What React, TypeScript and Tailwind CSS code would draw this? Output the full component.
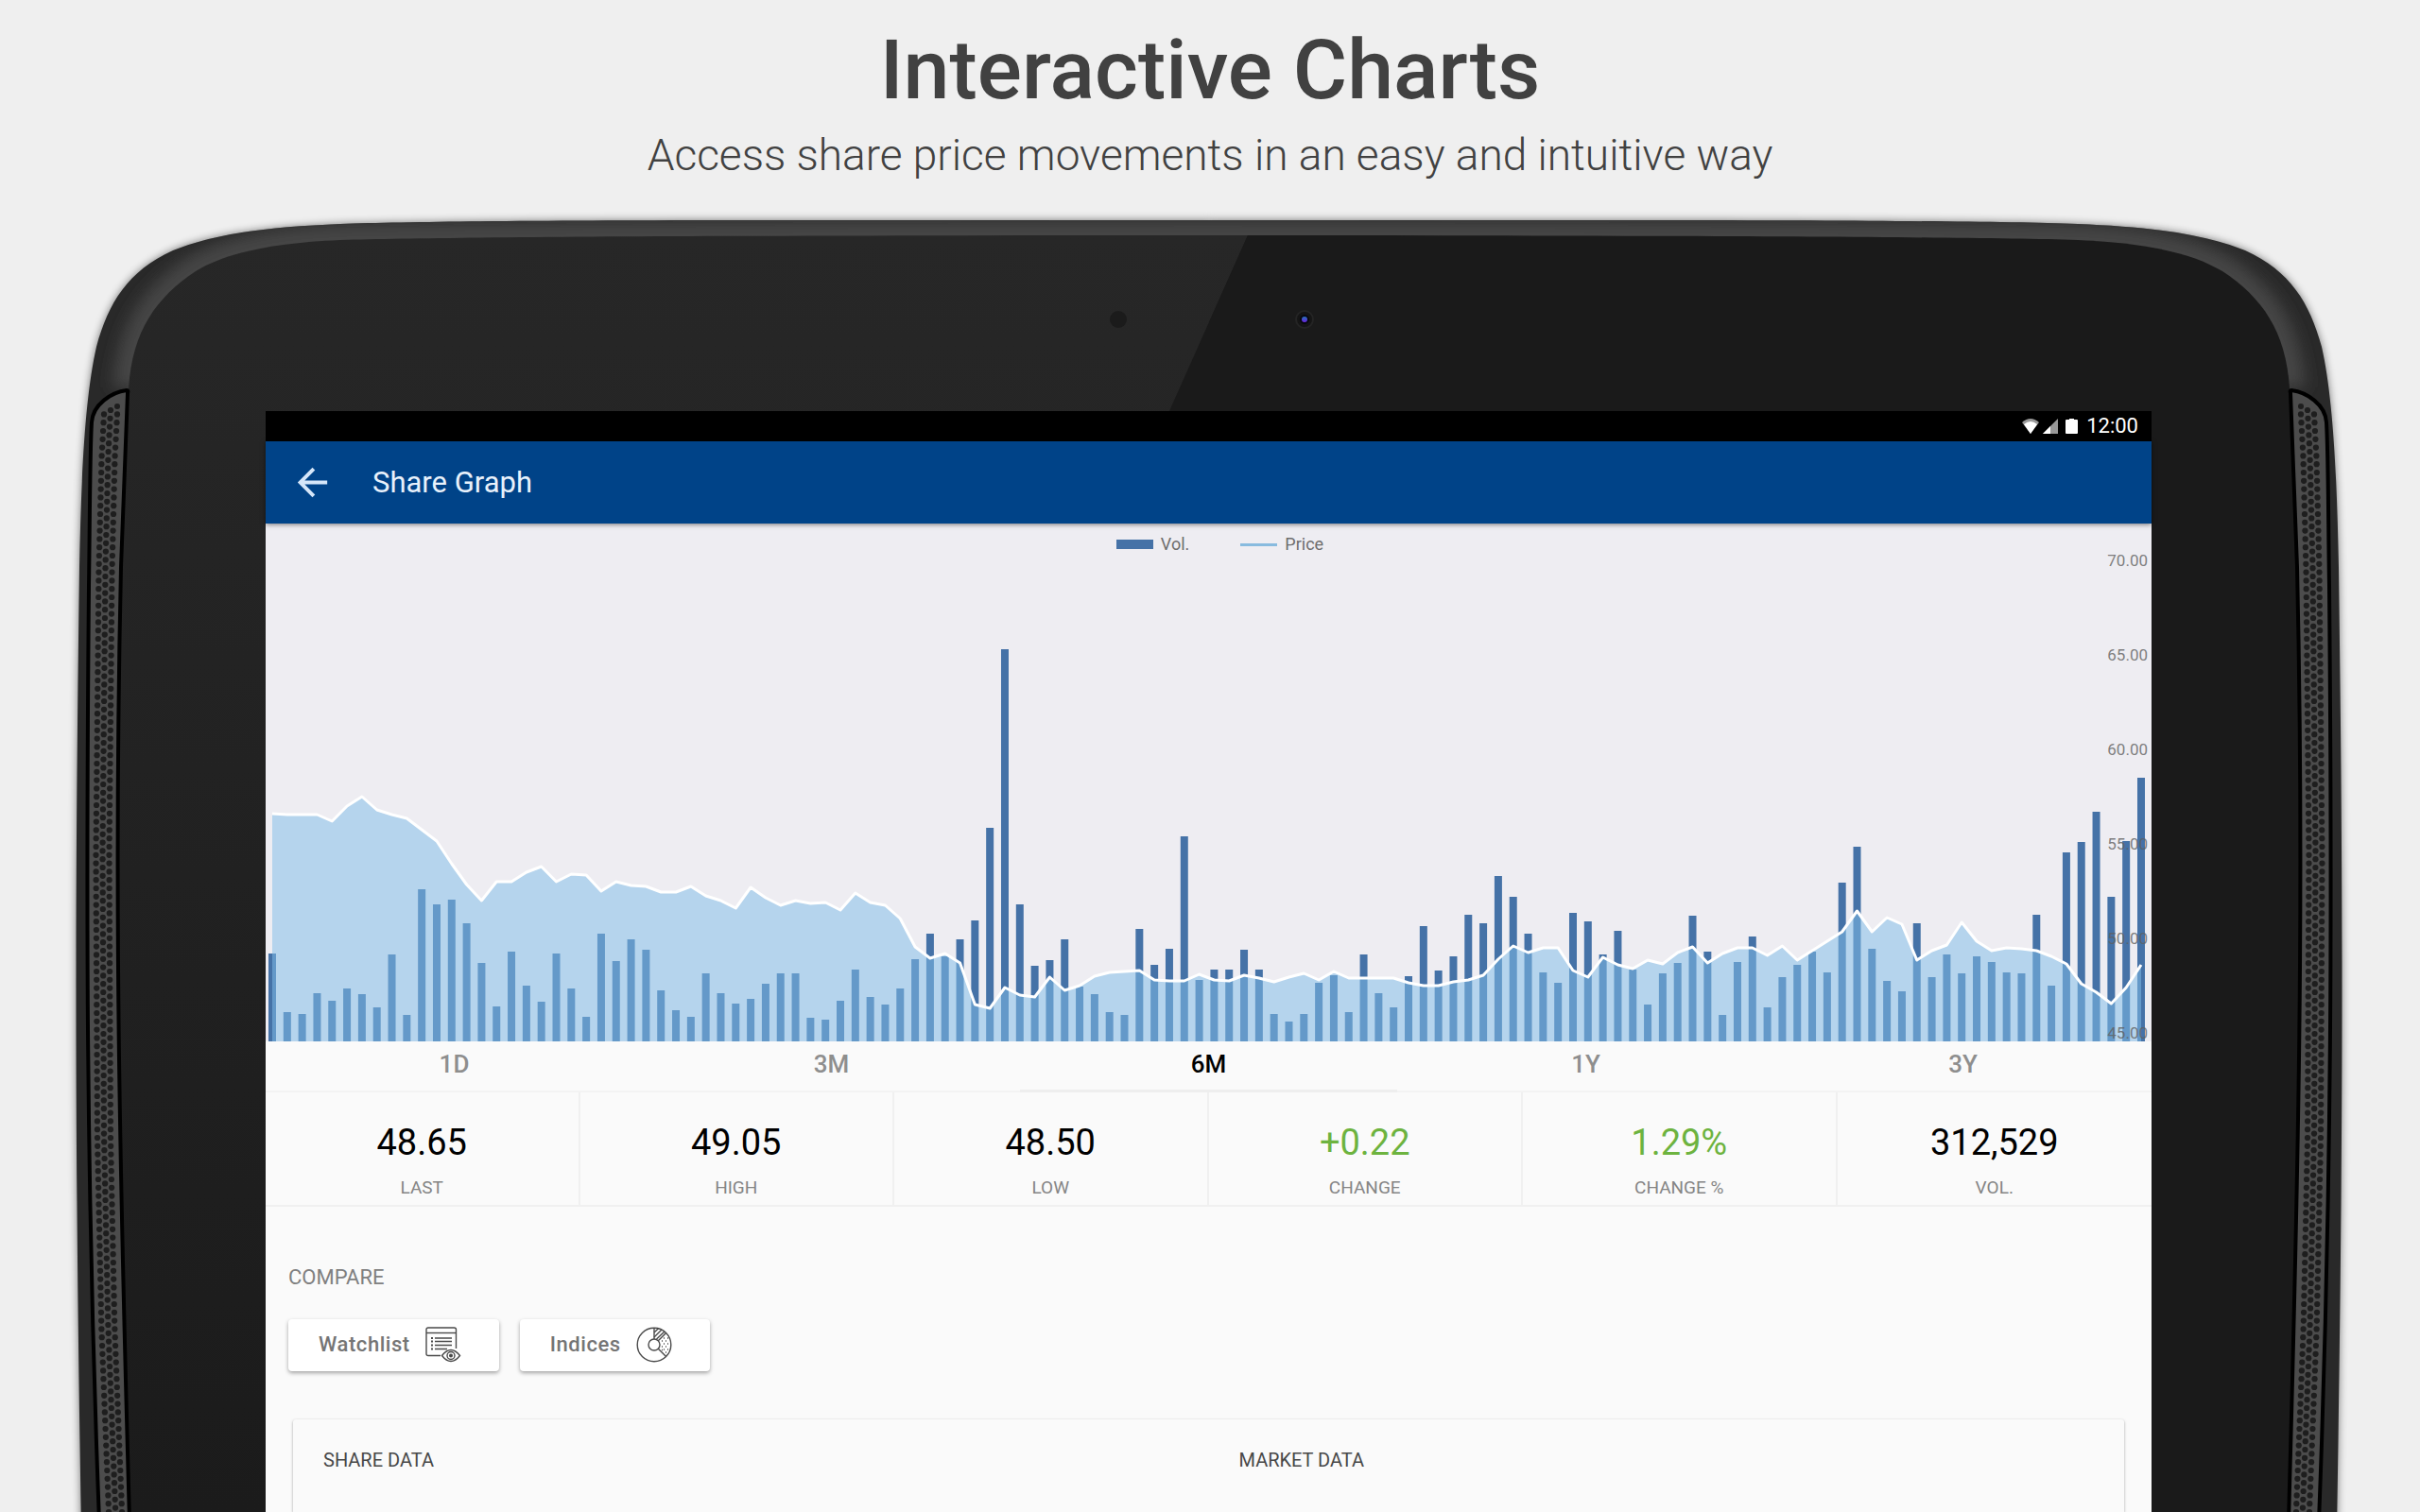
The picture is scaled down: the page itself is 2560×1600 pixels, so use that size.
import { MdArrowBack } from "react-icons/md";

interface Stat {
  label: string;
  value: string;
  positive?: boolean;
}

const STATS: Stat[] = [
  { label: "LAST", value: "48.65" },
  { label: "HIGH", value: "49.05" },
  { label: "LOW", value: "48.50" },
  { label: "CHANGE", value: "+0.22", positive: true },
  { label: "CHANGE %", value: "1.29%", positive: true },
  { label: "VOL.", value: "312,529" },
];

const RANGES = ["1D", "3M", "6M", "1Y", "3Y"];

const AXIS = ["70.00", "65.00", "60.00", "55.00", "50.00", "45.00"];

const VOLUME = [
  93, 31, 29, 51, 43, 56, 50, 36, 92, 28, 161, 145, 150, 125, 83, 37, 95, 59, 42, 93,
  56, 26, 114, 85, 108, 97, 54, 33, 26, 72, 51, 40, 45, 61, 72, 72, 25, 23, 43, 76,
  47, 39, 56, 87, 114, 90, 108, 128, 226, 415, 145, 80, 86, 108, 58, 50, 31, 28, 119, 81,
  98, 217, 65, 76, 76, 97, 76, 29, 21, 29, 62, 70, 31, 92, 51, 36, 69, 122, 75, 90,
  134, 125, 175, 153, 114, 73, 62, 136, 127, 92, 117, 76, 39, 72, 83, 133, 95, 28, 84, 111,
  36, 68, 81, 95, 73, 168, 206, 98, 64, 53, 125, 68, 92, 72, 90, 84, 73, 72, 134, 59,
  200, 211, 243, 153, 212, 279,
];

const PRICE = [
  241, 240, 240, 240, 233, 249, 259, 245, 240, 236, 224, 212, 188, 166, 149, 169, 169, 179, 185, 169,
  177, 176, 159, 169, 165, 164, 158, 158, 164, 154, 149, 141, 163, 152, 144, 149, 146, 147, 139, 157,
  147, 144, 130, 100, 88, 93, 83, 39, 35, 57, 49, 47, 68, 54, 59, 69, 73, 74, 75, 65,
  64, 64, 71, 65, 64, 70, 67, 63, 68, 72, 65, 74, 67, 67, 67, 67, 62, 59, 59, 63,
  65, 70, 87, 101, 94, 99, 99, 75, 68, 89, 81, 77, 86, 82, 94, 100, 83, 93, 99, 99,
  91, 101, 86, 96, 106, 116, 138, 116, 131, 124, 86, 96, 102, 126, 106, 96, 99, 98, 96, 90,
  82, 61, 52, 40, 57, 81,
];

const CHART_W = 1995;
const CHART_H = 548;
const xAt = (i: number) => 7 + i * 15.816;

function ShareChart() {
  const line = PRICE.map((p, i) => `${xAt(i)},${CHART_H - p}`).join(" ");
  const area = `${xAt(0)},${CHART_H} ${line} ${xAt(PRICE.length - 1)},${CHART_H}`;

  return (
    <svg
      viewBox={`0 0 ${CHART_W} ${CHART_H}`}
      preserveAspectRatio="none"
      className="block w-full h-[548px]"
      role="img"
      aria-label="Price and volume over six months"
    >
      {VOLUME.map((v, i) => (
        <rect key={i} x={xAt(i) - 4} y={CHART_H - v} width={8} height={v} fill="#4572a7" />
      ))}
      <polygon points={area} fill="#81bee8" fillOpacity={0.52} />
      <polyline points={line} fill="none" stroke="#fff" strokeWidth={3} strokeLinejoin="round" />
    </svg>
  );
}

/* Perforated speaker strip on the left edge of the tablet */
const SPEAKER_MID = [
  [434, 117],
  [480, 114.5],
  [600, 111.5],
  [900, 108.5],
  [1200, 110],
  [1400, 114.3],
  [1620, 123],
];

function speakerX(y: number) {
  for (let i = 1; i < SPEAKER_MID.length; i++) {
    const [y0, x0] = SPEAKER_MID[i - 1];
    const [y1, x1] = SPEAKER_MID[i];
    if (y <= y1) return x0 + ((x1 - x0) * (y - y0)) / (y1 - y0);
  }
  return 123;
}

function Speaker() {
  const rows = Array.from({ length: 134 }, (_, i) => 434 + i * 8.8);
  return (
    <g>
      <path
        d="M134 413C118 415 98 428 97 447C95 480 95 560 94 620C91 950 91 1250 105 1610H137C127 1250 120 950 128 600L135 416Q136 413 134 413Z"
        fill="#4c4c4c"
        stroke="#000"
        strokeWidth="4"
      />
      <circle cx="124" cy="430" r="3" fill="#1e1e1e" />
      {rows.map((y) => (
        <g key={y} fill="#1e1e1e">
          <circle cx={speakerX(y)} cy={y} r="3.1" />
          <circle cx={speakerX(y) - 7} cy={y + 4.4} r="3.1" />
          <circle cx={speakerX(y) + 7} cy={y + 4.4} r="3.1" />
        </g>
      ))}
    </g>
  );
}

const BODY_HALF =
  "M1279 233C900 233 500 232 360 237C290 240 230 246 183 265C135 287 115 320 102 367C90 420 86 500 84 600C80 900 78 1150 86 1620H1279Z";
const RIM = "M1279 249C900 249 500 250 360 254C290 257 240 267 207 287C165 315 140 350 136 411";
const GLASS_HALF = `${RIM}L128 600C120 950 127 1250 137 1620H1279Z`;

function TabletFrame() {
  return (
    <svg
      viewBox="0 200 2560 1400"
      preserveAspectRatio="none"
      className="absolute inset-0 w-full h-full"
      aria-hidden="true"
    >
      <defs>
        <filter id="shadow" x="-5%" y="-5%" width="110%" height="110%">
          <feGaussianBlur stdDeviation="4" />
        </filter>
        <filter id="soft" x="-5%" y="-20%" width="110%" height="140%">
          <feGaussianBlur stdDeviation="8" />
        </filter>
        <linearGradient id="sheen" x1="0" y1="249" x2="0" y2="1600" gradientUnits="userSpaceOnUse">
          <stop offset="0" stopColor="#272727" />
          <stop offset="1" stopColor="#1b1b1b" />
        </linearGradient>
        <linearGradient id="lens" x1="0" y1="0" x2="0" y2="1">
          <stop offset="0" stopColor="#2473b8" />
          <stop offset="1" stopColor="#6b22e0" />
        </linearGradient>
        <clipPath id="body">
          <path d={BODY_HALF} />
        </clipPath>
        <g id="half">
          <path d={BODY_HALF} fill="#292929" />
          <g clipPath="url(#body)">
            <path
              d={RIM.replace("M1279 249", "M1400 249L1279 249")}
              fill="none"
              stroke="#454545"
              strokeWidth="34"
              filter="url(#soft)"
            />
          </g>
        </g>
      </defs>
      <path d={BODY_HALF} fill="#000" opacity="0.5" filter="url(#shadow)" />
      <path d={BODY_HALF} fill="#000" opacity="0.5" filter="url(#shadow)" transform="translate(2558) scale(-1 1)" />
      <use href="#half" />
      <use href="#half" transform="translate(2558) scale(-1 1)" />
      <path d={GLASS_HALF} fill="url(#sheen)" />
      <path d={GLASS_HALF} fill="#1a1a1a" transform="translate(2558) scale(-1 1)" />
      <path d="M1200 249H1320L1237 435V1600H1200Z" fill="url(#sheen)" />
      <path d="M1320 249L1237 435H1330V249Z" fill="#1a1a1a" />
      <Speaker />
      <g transform="translate(2558) scale(-1 1)">
        <Speaker />
      </g>
      <circle cx="1183" cy="338" r="9" fill="#1b1b1b" />
      <circle cx="1380" cy="338" r="9" fill="#151515" stroke="#242424" strokeWidth="2" />
      <circle cx="1380" cy="338" r="5" fill="#080810" />
      <circle cx="1380" cy="338" r="3" fill="url(#lens)" />
    </svg>
  );
}

function StatusBar() {
  return (
    <div className="flex h-8 items-center justify-end bg-black pr-[14px] text-[22px] leading-8 text-white">
      <svg viewBox="0 0 60 18" className="mr-2 h-[18px] w-[60px]" aria-hidden="true">
        <path d="M0 5Q9 -3 18 5L9 17Z" fill="#999" />
        <path d="M2 7Q9 1 16 7L9 17Z" fill="#fff" />
        <path d="M22 17L38 1V17Z" fill="#999" />
        <path d="M22 17L30 9V17Z" fill="#fff" />
        <path d="M50 1H55V2H58Q59 2 59 3V16Q59 17 58 17H47Q46 17 46 16V3Q46 2 47 2H50Z" fill="#fff" />
      </svg>
      <span>12:00</span>
    </div>
  );
}

function WatchlistIcon() {
  return (
    <svg viewBox="0 0 38 38" className="h-[38px] w-[38px]" fill="none" stroke="#4a4a4a" strokeWidth="1.4" aria-hidden="true">
      <path d="M16 30.500H3Q1 30.500 1 28.500V3Q1 1 3 1H30.500Q32.500 1 32.500 3V23" />
      <path d="M1 6.500H32.500" />
      <path d="M10 12H28M10 15.500H28M10 19.500H28M10 23.500H23" />
      <path d="M6 12H8M6 15.500H8M6 19.500H8M6 23.500H8" strokeWidth="2" />
      <path d="M17.500 30.500Q27 18.500 36.500 30.500Q27 42.500 17.500 30.500Z" />
      <circle cx="27" cy="30.500" r="4" />
      <circle cx="27" cy="30.500" r="1.300" fill="#4a4a4a" />
    </svg>
  );
}

function IndicesIcon() {
  return (
    <svg viewBox="0 0 38 38" className="h-[38px] w-[38px]" fill="none" stroke="#4a4a4a" strokeWidth="1.4" aria-hidden="true">
      <circle cx="19" cy="19" r="17.800" />
      <circle cx="19" cy="19" r="6" />
      <path d="M19 1.200V13M23.300 14.700L31.600 6.400M23.300 23.300L31.600 31.600" />
      <path d="M19 6L23.500 1.800M19 11L27 3M21.500 13L30 5" />
      <path
        d="M29 12H30M33 12H34M27 15H28M31 15H32M29 18H30M33 18H34M27 21H28M31 21H32M29 24H30M33 24H34M31 27H32M27 24.500H28"
        strokeWidth="1.300"
      />
    </svg>
  );
}

export default function App() {
  return (
    <div className="flex min-h-screen flex-col overflow-hidden bg-[#efefef] font-['Roboto',sans-serif]">
      <header className="flex h-[200px] flex-col items-center pt-6 text-[#414141]">
        <h1 className="text-[88px] font-medium leading-[100px]">Interactive Charts</h1>
        <p className="mt-3 text-[46px] font-light leading-[56px]">
          Access share price movements in an easy and intuitive way
        </p>
      </header>

      <main className="relative flex flex-1 flex-col pl-[281px] pr-[284px] pt-[235px]">
        <TabletFrame />

        <div className="relative flex flex-1 flex-col bg-[#fafafa]">
          <StatusBar />

          {/* App bar */}
          <div className="relative z-10 flex h-[87px] items-center bg-[#004388] pl-[26px] shadow-[0_1px_5px_rgba(0,0,0,0.5)]">
            <button type="button" aria-label="Back" className="text-[#d5e6f9]">
              <MdArrowBack size={47} />
            </button>
            <h2 className="ml-10 text-[31px] leading-9 text-[#e8f1fb]">Share Graph</h2>
          </div>

          {/* Chart */}
          <section className="relative bg-[#eeedf2]">
            <ShareChart />
            <div className="absolute inset-x-0 top-[10px] flex items-center justify-center gap-[54px] pl-6 text-[18px] leading-6 text-[#6e6e6e]">
              <span className="flex items-center gap-2">
                <i className="h-[10px] w-[39px] bg-[#4572a7]" />
                Vol.
              </span>
              <span className="flex items-center gap-2">
                <i className="h-[3px] w-[39px] bg-[#88bbdf]" />
                Price
              </span>
            </div>
            <ul className="absolute right-1 top-[29px] flex flex-col gap-20 text-[17px] leading-5 text-[#606060]/80">
              {AXIS.map((label) => (
                <li key={label}>{label}</li>
              ))}
            </ul>
          </section>

          {/* Range tabs */}
          <div role="tablist" className="grid h-[54px] grid-cols-5 text-[26px] font-medium">
            {RANGES.map((range) => (
              <button
                key={range}
                type="button"
                role="tab"
                aria-selected={range === "6M"}
                className={
                  range === "6M"
                    ? "border-b-3 border-[#eeeeee] pb-0.5 text-black"
                    : "border-b-2 border-[#f3f3f3] pb-[3px] text-[#8e8e8e]"
                }
              >
                {range}
              </button>
            ))}
          </div>

          {/* Quote figures */}
          <dl className="grid h-[121px] grid-cols-6 border-b-2 border-[#f0f0f0]">
            {STATS.map(({ label, value, positive }) => (
              <div
                key={label}
                className="flex flex-col-reverse items-center justify-end border-r-2 border-[#f0f0f0] pt-[31px] last:border-r-0"
              >
                <dt className="mt-[14px] text-[19px] leading-6 text-[#858585]">{label}</dt>
                <dd className={positive ? "text-[38px] leading-11 text-[#6db33f]" : "text-[38px] leading-11 text-black"}>
                  {value}
                </dd>
              </div>
            ))}
          </dl>

          {/* Compare */}
          <section className="px-6 pt-[61px]">
            <h3 className="text-[22px] leading-7 text-[#808080]">COMPARE</h3>
            <div className="mt-[30px] flex gap-[22px]">
              <button
                type="button"
                className="flex h-[55px] items-center gap-4 rounded-[4px] bg-white pb-0.5 pl-8 pr-10 text-[22px] font-medium tracking-wide text-[#757575] shadow-[0_2px_4px_rgba(0,0,0,0.35)]"
              >
                Watchlist
                <WatchlistIcon />
              </button>
              <button
                type="button"
                className="flex h-[55px] items-center gap-4 rounded-[4px] bg-white pb-0.5 pl-8 pr-10 text-[22px] font-medium tracking-wide text-[#757575] shadow-[0_2px_4px_rgba(0,0,0,0.35)]"
              >
                Indices
                <IndicesIcon />
              </button>
            </div>
          </section>

          {/* Share and market data */}
          <section className="mx-[29px] mt-[51px] grid flex-1 grid-cols-2 rounded-t-[3px] pt-[29px] shadow-[0_1px_3px_rgba(0,0,0,0.35)]">
            <h3 className="pl-8 text-[20px] leading-7 text-[#484848]">SHARE DATA</h3>
            <h3 className="pl-8 text-[20px] leading-7 text-[#484848]">MARKET DATA</h3>
          </section>
        </div>
      </main>
    </div>
  );
}
